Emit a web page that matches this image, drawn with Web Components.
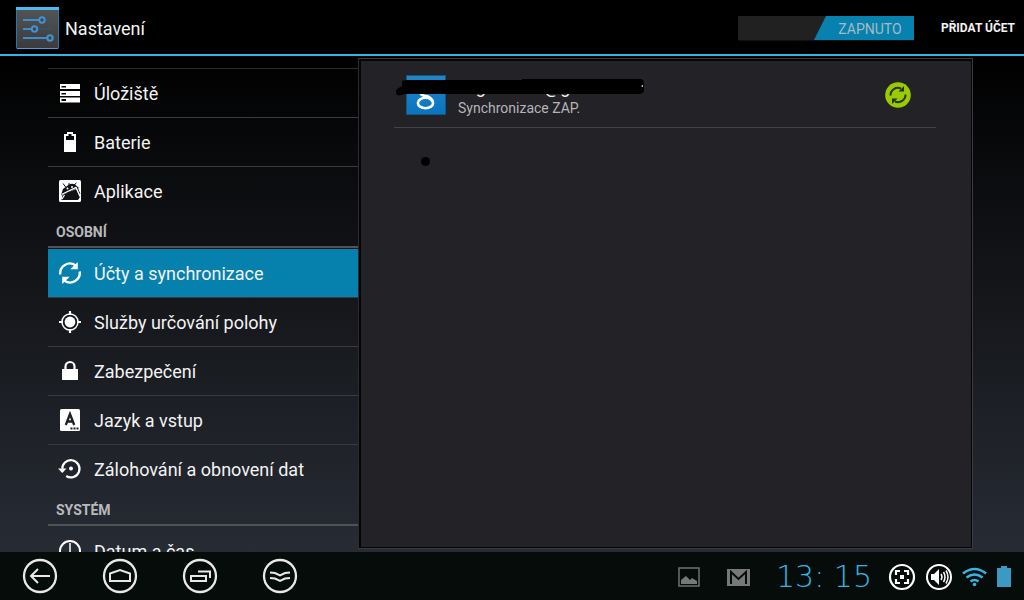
<!DOCTYPE html>
<html lang="cs">
<head>
<meta charset="utf-8">
<title>Nastavení</title>
<style>
html,body{margin:0;height:100%;background:#000}
body{font-family:Roboto,"Noto Sans",sans-serif;color:#f3f3f3}
</style>
</head>
<body>
<settings-app></settings-app>
<script>
const define=(name,html,connected)=>{
  const t=document.createElement('template');
  t.innerHTML='<style>*{box-sizing:border-box}svg{display:block}</style>'+html;
  customElements.define(name,class extends HTMLElement{
    constructor(){super();this.attachShadow({mode:'open'}).append(t.content.cloneNode(true));}
    connectedCallback(){if(connected)connected(this);}
  });
};

const icons={
  storage:'<path fill="#fff" fill-rule="evenodd" d="M2 3h20v5H2zM3.500 5v1.500h4.500V5zM2 10h20v5H2zM3.500 12v1.500h4.500V12zM2 16.500h20v5H2zM3.500 18v2h4.500v-2z"/>',
  battery:'<path fill="#fff" fill-rule="evenodd" d="M6 4h3V2h6v2h3v18H6zM8 6v4h8V6h-2.500V4h-3v2z"/>',
  apps:'<rect x="1" y="1" width="22" height="22" rx="1.500" fill="#fff"/><path fill="#111214" d="M3 16 21 9l-4-3.500a7 7 0 0 0-6 0L5 10zM3.500 21l1-5L19 9l3 9-2 3z"/><path d="m5 4.500 3 4M11 4v4m5-2 2.500-2M3 16l16-8 3 7" stroke="#111214" stroke-width="1" fill="none"/><path d="m3.500 15.500 14.500-7 4 9M4 20l2.500-4" stroke="#fff" stroke-width="1.300" fill="none"/><circle cx="9.500" cy="9.500" r="1" fill="#fff"/><circle cx="14" cy="8" r="1" fill="#fff"/>',
  sync:'<g fill="none" stroke="#fff" stroke-width="2.400"><path d="M2.300 13.500A9.700 9.700 0 0 1 17.500 4.300M21.700 10.500A9.700 9.700 0 0 1 6.500 19.700"/></g><path fill="#fff" d="M19.800 1v7.200h-7.500zM4.200 23v-7.200h7.500z"/>',
  location:'<circle cx="12" cy="12" r="5.400" fill="#fff"/><circle cx="12" cy="12" r="8" fill="none" stroke="#fff" stroke-width="1.500"/><path d="M12 1v4M12 19v4M1 12h4M19 12h4" stroke="#fff" stroke-width="2.200"/>',
  lock:'<path fill="none" stroke="#fff" stroke-width="2.200" d="M7.500 11V7.500a4.500 4.500 0 0 1 9 0V11"/><path fill="#fff" d="M4 10h16v11H4z"/>',
  language:'<rect x="2" y="1" width="20" height="22" rx="1.500" fill="#fff"/><path d="m7.800 17 4.200-11 4.200 11M9.500 13.500h5" fill="none" stroke="#1c1f23" stroke-width="2.300"/><path d="M12.500 20.500h8" stroke="#1c1f23" stroke-width="1.800" stroke-dasharray="2 1"/>',
  backup:'<path d="M4.300 12.500A8.600 8.600 0 1 1 8.200 19" fill="none" stroke="#fff" stroke-width="2.200"/><path d="M0 11.500h8.500l-4.200 4.500z" fill="#fff"/><circle cx="13" cy="11.500" r="2" fill="#fff"/>',
  clock:'<circle cx="12" cy="12" r="10" fill="none" stroke="#fff" stroke-width="2"/><path d="M12 4v9l4 3" fill="none" stroke="#fff" stroke-width="1.500"/>'
};

define('app-header',`<style>
:host{display:flex;align-items:center;height:56px;flex:none;padding:0 8px 0 15px;background:#000;border-bottom:2px solid #33b5e5}
h1{margin:0 auto 0 6px;font-size:18px;line-height:24px;font-weight:400;padding-top:3px}
button{font:inherit;color:inherit;border:0;background:none;padding:0}
.toggle{width:176px;height:24px;margin:2px 26px 0 0;background:#212121;display:flex;justify-content:flex-end;box-shadow:0 2px 0 -1px #111}
.toggle span{width:100px;clip-path:polygon(12px 0,100% 0,100% 100%,0 100%);background:#0782ae;color:#a9b9c0;font-size:14px;line-height:26px;padding-left:12px;text-align:center}
.add{width:76px;font-size:12px;line-height:16px;font-weight:700;padding-top:1px;white-space:nowrap}
</style>
<svg width="44" height="46" viewBox="0 -2 44 46"><defs><linearGradient id="g" x2="0" y2="1"><stop stop-color="#555"/><stop offset=".5" stop-color="#484848"/><stop offset="1" stop-color="#3b3b3d"/></linearGradient></defs><rect x="1.500" y="1.500" width="42" height="41" rx="1" fill="url(#g)" stroke="#2877b5"/><path d="M1 1h43v3H1z" fill="#4bbcf0"/><path d="M2 42.500h41" stroke="#3f9fe0"/><g stroke="#255b88" stroke-width="1.200"><path d="M8 14h30M8 23h30M8 32h30"/></g><path d="M8 14h16M8 23h9M8 32h24" stroke="#3da5ef" stroke-width="1.500"/><g fill="#444" stroke="#3d93d6" stroke-width="2"><circle cx="27" cy="14" r="2.700"/><circle cx="19.500" cy="23" r="2.700"/><circle cx="35" cy="32" r="2.700"/></g></svg>
<h1>Nastavení</h1>
<button class="toggle" role="switch" aria-checked="true"><span>ZAPNUTO</span></button>
<button class="add">PŘIDAT ÚČET</button>`);

define('nav-section',`<style>
:host{display:block}
h2{margin:0 0 1px;height:32px;padding:0 8px;border-bottom:2px solid #505255;font-size:14px;line-height:32px;font-weight:700;color:#b8b9bb}
</style><h2><slot name="title"></slot></h2><slot></slot>`);

define('nav-item',`<style>
:host{display:block;height:49px;border-bottom:1px solid #393b3e}
:host([last]){border-color:transparent}
:host([selected]){background:#0680ad}
a{display:flex;align-items:center;height:48px;padding:0 10px;gap:12px;color:#f3f3f3;text-decoration:none;font-size:18px;line-height:24px}
span{padding-top:2px;white-space:nowrap}
</style><a href="#"><svg width="24" height="24" viewBox="0 0 24 24" aria-hidden="true"></svg><span><slot></slot></span></a>`,
el=>{el.shadowRoot.querySelector('svg').innerHTML=icons[el.getAttribute('icon')];});

define('settings-nav',`<style>
:host{display:block;min-width:0}
.above{height:13px;border-bottom:1px solid #2b2c2d}
</style><div class="above"></div>
<nav aria-label="Nastavení">
<nav-item icon="storage">Úložiště</nav-item><nav-item icon="battery">Baterie</nav-item><nav-item icon="apps" last>Aplikace</nav-item>
<nav-section><span slot="title">OSOBNÍ</span>
<nav-item icon="sync" selected>Účty a synchronizace</nav-item><nav-item icon="location">Služby určování polohy</nav-item><nav-item icon="lock">Zabezpečení</nav-item><nav-item icon="language">Jazyk a vstup</nav-item><nav-item icon="backup" last>Zálohování a obnovení dat</nav-item></nav-section>
<nav-section><span slot="title">SYSTÉM</span><nav-item icon="clock">Datum a čas</nav-item></nav-section>
</nav>`);

define('account-row',`<style>
:host{display:flex;position:relative;height:66px;padding:13px 25px 0 12px;border-bottom:1px solid #434246}
.text{flex:1;padding:1px 0 0 12px;min-width:0}
.name{font-size:18px;line-height:22px;white-space:pre}
.state{font-size:14px;line-height:20px;color:#b5b5b8}
.sync{margin-top:7px}
.cover{position:absolute;left:2px;top:16px}
</style>
<svg width="40" height="40" viewBox="0 0 40 40"><defs><linearGradient id="b" x2="0" y2="1"><stop stop-color="#2386c9"/><stop offset="1" stop-color="#0874bf"/></linearGradient></defs><rect x=".5" y=".5" width="39" height="39" fill="url(#b)" stroke="#155780"/><ellipse cx="19.500" cy="28" rx="7.600" ry="5.200" fill="none" stroke="#fff" stroke-width="2.600"/><path d="M15 17q-1 3 4 4 6 1 8 6" fill="none" stroke="#fff" stroke-width="2.800"/></svg>
<div class="text"><div class="name">    g             @g</div><div class="state"><slot></slot></div></div>
<svg class="sync" width="26" height="26" viewBox="0 0 26 26"><circle cx="13" cy="13" r="12.800" fill="#9c0"/><g fill="none" stroke="#29301c" stroke-width="2"><path d="M5.500 13.500A7.500 7.500 0 0 1 16 6.500M20.500 12.500A7.500 7.500 0 0 1 10 19.500"/></g><path fill="#29301c" d="M19 4v5.500h-5.500zM7 22v-5.500h5.500z"/></svg>
<svg class="cover" width="248" height="18" viewBox="0 0 248 18"><path d="M6 3 10 2H126V1H245q3 1 3 4v8q-1 3-5 3H8q-2 2-7 1-2-3 0-6l5-3z"/><path d="m245 8 2-1v2z" fill="#fff"/></svg>`);

define('account-panel',`<style>
:host{display:block;position:relative;min-width:0;margin:2px 0 3px;border:1px solid #3c3c3f;border-left-color:#2b2b2e;padding:2px 1px 1px 2px;background:#050505}
.body{height:100%;background:#232227;padding:1px 35px 0 33px}
.dot{position:absolute;left:62px;top:98px;width:9px;height:9px;border-radius:50%;background:#000}
</style><div class="body"><account-row>Synchronizace ZAP.</account-row></div><div class="dot"></div>`);

define('system-bar',`<style>
:host{display:flex;align-items:center;height:48px;flex:none;background:#060c09;padding:0 13px 0 22px}
.keys{display:flex;gap:44px;margin-right:auto}
button{padding:0;border:0;background:none}
.status{display:flex;align-items:center;padding-top:2px}
.notes{display:flex;gap:27px;margin-right:26px}
time{font-family:"DejaVu Sans","DejaVu Sans Light",sans-serif;font-weight:200;font-size:30px;line-height:36px;color:#33b5e5;margin-right:16px;white-space:nowrap}
.tray{display:flex;align-items:center;gap:9px}
</style>
<div class="keys">
<button aria-label="Zpět"><svg width="36" height="36" viewBox="0 0 36 36" fill="none" stroke="#e8e8e8" stroke-width="2"><circle cx="18" cy="18" r="16" stroke-width="2.300"/><path d="M28 18H9M16 11l-7 7 7 7"/></svg></button>
<button aria-label="Domů"><svg width="36" height="36" viewBox="0 0 36 36" fill="none" stroke="#e8e8e8" stroke-width="2"><circle cx="18" cy="18" r="16" stroke-width="2.300"/><path d="M8 23V15.500L18 12l10 3.500V23z"/></svg></button>
<button aria-label="Poslední"><svg width="36" height="36" viewBox="0 0 36 36" fill="none" stroke="#e8e8e8" stroke-width="2"><circle cx="18" cy="18" r="16" stroke-width="2.300"/><path d="M9 18h15v5H9zM16 13.500h12V20"/></svg></button>
<button aria-label="Skrýt"><svg width="36" height="36" viewBox="0 0 36 36" fill="none" stroke="#e8e8e8" stroke-width="2"><circle cx="18" cy="18" r="16" stroke-width="2.300"/><path d="m8 14.500 5 .5 5 2.500 5-2.500 5-.5M8 20l5 .5 5 2.500 5-2.500 5-.5"/></svg></button>
</div>
<div class="status">
<div class="notes">
<svg width="22" height="24" viewBox="0 0 22 24"><path d="M1 3h20v18H1z" fill="none" stroke="#6f716f" stroke-width="1.500"/><path d="M3 19v-4l5-4 4 4 2-2 5 3v3z" fill="#777977"/></svg>
<svg width="23" height="24" viewBox="0 0 23 24"><path d="M0 4h23v17H0z" fill="#777977"/><path d="M4 19V7l7.500 7L19 7v12" fill="none" stroke="#060c09" stroke-width="2"/></svg>
</div>
<time>13: 15</time>
<div class="tray">
<svg width="28" height="28" viewBox="0 0 28 28" fill="none" stroke="#fff" stroke-width="2.200"><circle cx="14" cy="14" r="12"/><path d="M8 12V8h4M16 8h4v4M20 16v4h-4M12 20H8v-4"/><path d="M12 12h4v4h-4z" fill="#fff" stroke="none"/></svg>
<svg width="28" height="28" viewBox="0 0 28 28" fill="none" stroke="#fff"><circle cx="14" cy="14" r="12" stroke-width="2"/><path d="M6 11h3l5-5v16l-5-5H6z" fill="#fff" stroke="none"/><path d="M16 11q2 3 0 6M18.500 9q3 5 0 10M21 7.500q4 6.500 0 13" stroke-width="1.500"/></svg>
<svg width="26" height="20" viewBox="0 0 26 20" fill="none" stroke="#33b5e5" stroke-width="2.600"><path d="M1 6.500q11.500-9 23 0M4.500 10.500q8-6 16 0M8.500 14.500q4-3 8 0"/><circle cx="12.500" cy="17.500" r="1.800" fill="#33b5e5" stroke="none"/></svg>
<svg width="14" height="22" viewBox="0 0 14 22"><path d="M0 2h4V0h6v2h4v19H0z" fill="#3b9ac4"/></svg>
</div></div>`);

define('settings-app',`<style>
:host{display:flex;flex-direction:column;height:100vh;overflow:hidden}
main{flex:1;min-height:0;overflow:hidden;display:grid;grid-template-columns:310fr 615fr;grid-template-rows:minmax(0,1fr);padding:0 51px 0 48px;background:linear-gradient(#000,#090a0c 20%,#15171b 50%,#272b34)}
</style><app-header></app-header><main><settings-nav></settings-nav><account-panel></account-panel></main><system-bar></system-bar>`);
</script>
</body>
</html>
